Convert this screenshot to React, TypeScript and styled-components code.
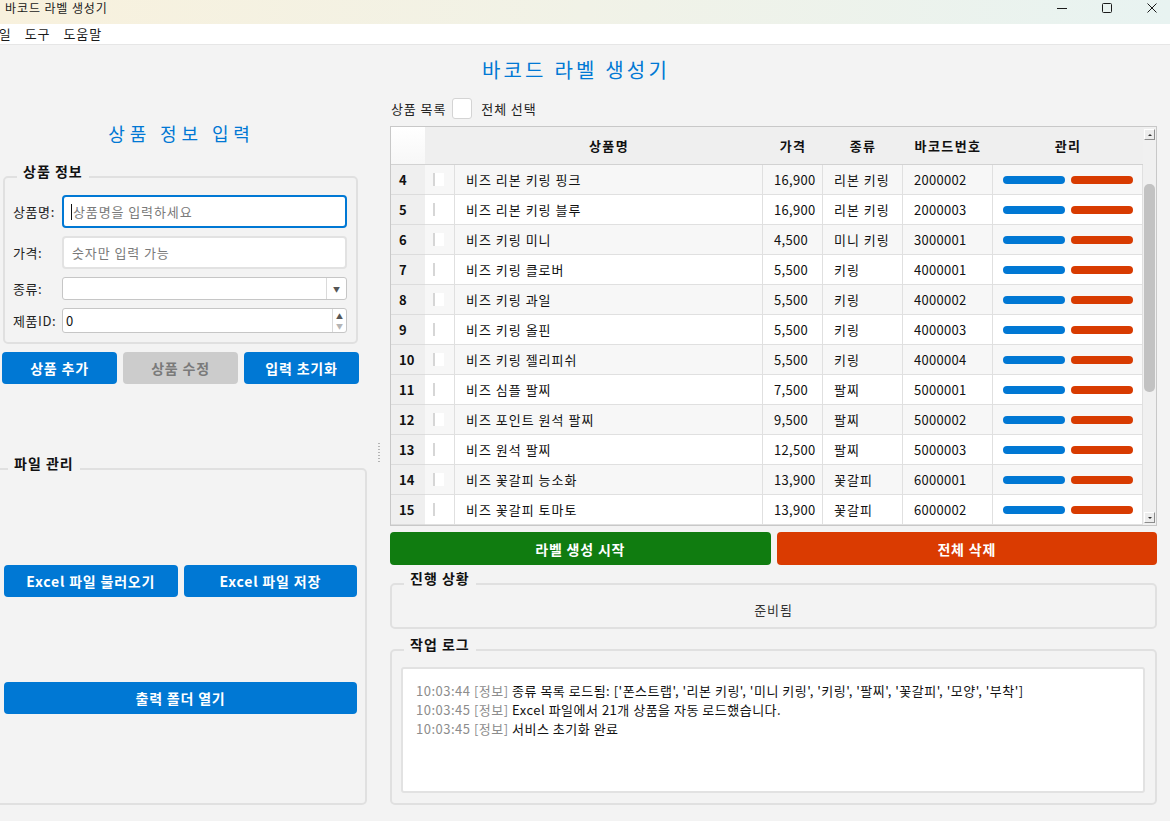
import styled, { createGlobalStyle } from 'styled-components';

const GlobalStyle = createGlobalStyle`
  * {
    box-sizing: border-box;
  }

  html,
  body {
    margin: 0;
    padding: 0;
    background: #f3f3f3;
  }

  body {
    font-family: 'Noto Sans CJK KR', 'Noto Sans', sans-serif;
    font-size: 13px;
    letter-spacing: 0.9px;
    color: #1b1b1b;
    overflow: hidden;
  }
`;

const Window = styled.div`
  width: 1170px;
  height: 821px;
  display: flex;
  flex-direction: column;
  overflow: hidden;
  background: #f3f3f3;
`;

const TitleBar = styled.div`
  height: 24px;
  flex: none;
  display: flex;
  align-items: flex-start;
  background: linear-gradient(90deg, #f8f1dd 0%, #f1f2e7 50%, #e8f3f1 100%);
`;

const TitleText = styled.div`
  flex: 1;
  padding: 0 0 0 5px;
  font-size: 12px;
  line-height: 16px;
  letter-spacing: 0.9px;
  color: #1a1a1a;
`;

const WinControls = styled.div`
  display: flex;
  margin-right: -4px;
`;

const WinButton = styled.div`
  width: 45px;
  height: 16px;
  display: flex;
  align-items: center;
  justify-content: center;
`;

const MenuBar = styled.div`
  height: 21px;
  flex: none;
  background: #fff;
  border-bottom: 1px solid #e6e6e6;
  overflow: hidden;
`;

const MenuList = styled.ul`
  display: flex;
  gap: 13px;
  margin: 0 0 0 -14px;
  padding: 0;
  list-style: none;
  font-size: 13px;
  line-height: 20px;
`;

const AppTitle = styled.h1`
  margin: 0;
  padding: 12px 18px 0 0;
  text-align: center;
  font-size: 20px;
  font-weight: 400;
  line-height: 26px;
  letter-spacing: 3.2px;
  color: #0078d4;
`;

const Split = styled.div`
  flex: 1;
  display: flex;
  margin-top: 9px;
  min-height: 0;
`;

const LeftColumn = styled.div`
  width: 368px;
  flex: none;
  display: flex;
  flex-direction: column;
`;

const SectionTitle = styled.h2`
  margin: 29px 5px 0 0;
  text-align: center;
  font-size: 18px;
  font-weight: 400;
  line-height: 24px;
  letter-spacing: 4.9px;
  color: #0078d4;
`;

const GroupBox = styled.section`
  position: relative;
  border: 2px solid #e0e0e0;
  border-radius: 5px;
`;

const GroupTitle = styled.h3`
  position: absolute;
  top: -15px;
  left: 12px;
  margin: 0;
  padding: 0 6px;
  background: #f3f3f3;
  font-size: 14px;
  font-weight: 700;
  line-height: 16px;
  letter-spacing: 1px;
  color: #111;
`;

const InfoGroup = styled(GroupBox)`
  width: 355px;
  margin: 31px 0 0 3px;
  padding: 17px 9px 9px 8px;
  display: flex;
  flex-direction: column;
  gap: 8px;
`;

const FormRow = styled.div`
  display: flex;
  align-items: center;
`;

const FieldLabel = styled.label`
  width: 49px;
  flex: none;
  font-size: 13px;
  line-height: 16px;
  letter-spacing: 0.6px;
  color: #222;
`;

const TextField = styled.div<{ $focused?: boolean }>`
  flex: 1;
  height: 33px;
  display: flex;
  align-items: center;
  padding-left: ${({ $focused }) => ($focused ? '7px' : '8px')};
  background: #fff;
  border: 2px solid ${({ $focused }) => ($focused ? '#0078d4' : '#e2e2e2')};
  border-radius: 4px;
`;

const Caret = styled.span`
  width: 1px;
  height: 16px;
  margin-right: 1px;
  background: #111;
`;

const Placeholder = styled.span`
  font-size: 13px;
  line-height: 16px;
  color: #7a7a7a;
`;

const ComboBox = styled.div`
  flex: 1;
  height: 23px;
  display: flex;
  background: #fff;
  border: 1px solid #c6c6c6;
  border-radius: 3px;
`;

const ComboValue = styled.div`
  flex: 1;
`;

const ComboArrow = styled.div`
  width: 20px;
  border-left: 1px solid #dadada;
  display: flex;
  align-items: center;
  justify-content: center;
  font-size: 7px;
  letter-spacing: 0;
  color: #555;
`;

const SpinBox = styled.div`
  flex: 1;
  height: 25px;
  display: flex;
  background: #fff;
  border: 1px solid #c6c6c6;
  border-radius: 3px;
`;

const SpinValue = styled.div`
  flex: 1;
  padding-left: 3px;
  font-size: 13px;
  line-height: 23px;
  color: #111;
`;

const SpinArrows = styled.div`
  width: 14px;
  border-left: 1px solid #dadada;
  display: flex;
  flex-direction: column;
  align-items: center;
  justify-content: center;
  font-size: 7px;
  line-height: 10px;
  letter-spacing: 0;
`;

const SpinArrow = styled.span<{ $dim?: boolean }>`
  color: ${({ $dim }) => ($dim ? '#b5b5b5' : '#555')};
`;

const ButtonRow = styled.div`
  display: flex;
  gap: 6px;
`;

const InfoButtons = styled(ButtonRow)`
  width: 357px;
  margin: 8px 0 0 2px;
`;

const Button = styled.button<{ $tone?: 'blue' | 'gray' | 'green' | 'red' }>`
  flex: 1;
  height: ${({ $tone }) => ($tone === 'green' || $tone === 'red' ? '33px' : '32px')};
  border: none;
  border-radius: 4px;
  font-family: inherit;
  font-size: 14px;
  font-weight: 700;
  letter-spacing: 0.8px;
  color: ${({ $tone }) => ($tone === 'gray' ? '#7a7a7a' : '#fff')};
  background: ${({ $tone }) =>
    $tone === 'gray' ? '#cccccc' : $tone === 'green' ? '#107c10' : $tone === 'red' ? '#da3b01' : '#0078d4'};
`;

const FileGroup = styled(GroupBox)`
  width: 373px;
  height: 337px;
  margin: 84px 0 0 -6px;
  padding: 95px 8px 0 8px;
`;

const FileButtons = styled(ButtonRow)`
  margin-bottom: 85px;
`;

const Splitter = styled.div`
  width: 22px;
  flex: none;
  display: flex;
  align-items: center;
  justify-content: center;
`;

const SplitHandle = styled.div`
  width: 2px;
  height: 20px;
  margin-top: -8px;
  background: repeating-linear-gradient(180deg, #b4b4b4 0 1px, transparent 1px 3px);
`;

const RightColumn = styled.div`
  width: 767px;
  flex: none;
  display: flex;
  flex-direction: column;
  padding-top: 6px;
`;

const ListHeader = styled.div`
  height: 21px;
  display: flex;
  align-items: center;
  padding-left: 1px;
  font-size: 13px;
  color: #222;
`;

const SelectAllBox = styled.span`
  width: 20px;
  height: 21px;
  margin: 0 9px 0 6px;
  background: #fff;
  border: 1px solid #d4d4d4;
  border-radius: 3px;
`;

const Table = styled.div`
  height: 400px;
  margin-top: 7px;
  display: flex;
  background: #fff;
  border: 1px solid #c8c8c8;
  overflow: hidden;
`;

const Grid = styled.div`
  width: 752px;
  flex: none;
`;

const columns = '34px 30px 308px 60px 80px 90px 150px';

const HeaderRow = styled.div`
  height: 38px;
  display: grid;
  grid-template-columns: ${columns};
  background: #efefef;
  border-bottom: 1px solid #d2d2d2;
`;

const CornerCell = styled.div`
  background: linear-gradient(180deg, #ffffff 0%, #f7f7f7 100%);
`;

const HeaderCell = styled.div`
  display: flex;
  align-items: center;
  justify-content: center;
  font-size: 13px;
  font-weight: 700;
  letter-spacing: 1.4px;
  color: #111;
`;

const Row = styled.div<{ $alt: boolean }>`
  height: 30px;
  display: grid;
  grid-template-columns: ${columns};
  background: ${({ $alt }) => ($alt ? '#f7f7f7' : '#fff')};
`;

const RowNum = styled.div`
  display: flex;
  align-items: center;
  padding-left: 8px;
  background: #efefef;
  border-bottom: 1px solid #dcdcdc;
  font-size: 13px;
  font-weight: 700;
  letter-spacing: 0;
  color: #111;
`;

const Cell = styled.div<{ $small?: boolean }>`
  display: flex;
  align-items: center;
  padding-left: 11px;
  border-right: 1px solid #e0e0e0;
  border-bottom: 1px solid #e0e0e0;
  font-size: 13px;
  letter-spacing: ${({ $small }) => ($small ? '0.3px' : '1px')};
  color: #111;
  white-space: nowrap;
`;

const CheckCell = styled(Cell)`
  padding-left: 8px;
`;

const CheckStub = styled.span`
  width: 11px;
  height: 13px;
  background: #fff;
  border-left: 2px solid #d6d6d6;
`;

const ManageCell = styled(Cell)`
  gap: 6px;
  padding-left: 10px;
`;

const Pill = styled.span<{ $danger?: boolean }>`
  width: 62px;
  height: 8px;
  border-radius: 4px;
  background: ${({ $danger }) => ($danger ? '#d83b01' : '#0078d4')};
`;

const ScrollBar = styled.div`
  flex: 1;
  display: flex;
  flex-direction: column;
  align-items: center;
  background: #f0f0f0;
`;

const ScrollArrow = styled.span<{ $down?: boolean }>`
  width: 11px;
  height: 11px;
  margin: ${({ $down }) => ($down ? '0 0 2px' : '2px 0 0')};
  display: flex;
  align-items: center;
  justify-content: center;
  background: #ececec;
  border: 1px solid;
  border-color: #ffffff #8c8c8c #8c8c8c #ffffff;

  &::after {
    content: '';
    border-left: 2px solid transparent;
    border-right: 2px solid transparent;
    ${({ $down }) => ($down ? 'border-top: 2px solid #333;' : 'border-bottom: 2px solid #333;')}
  }
`;

const ScrollTrack = styled.div`
  flex: 1;
  width: 100%;
  display: flex;
  justify-content: center;
`;

const ScrollThumb = styled.span`
  width: 11px;
  height: 208px;
  margin-top: 44px;
  border-radius: 5px;
  background: #c2c2c2;
`;

const ActionButtons = styled(ButtonRow)`
  margin-top: 6px;
`;

const StatusGroup = styled(GroupBox)`
  height: 46px;
  margin-top: 18px;
  padding-top: 17px;
  text-align: center;
  font-size: 13px;
  line-height: 16px;
  color: #333;
`;

const LogGroup = styled(GroupBox)`
  height: 156px;
  margin-top: 20px;
  padding: 16px 10px 10px 9px;
`;

const LogArea = styled.div`
  height: 126px;
  padding: 12px 13px;
  background: #fff;
  border: 2px solid #e2e2e2;
  border-radius: 3px;
`;

const LogLine = styled.div`
  font-size: 13px;
  line-height: 19px;
  letter-spacing: 0.5px;
  color: #111;
  white-space: nowrap;
`;

const LogMeta = styled.span`
  color: #8c8c8c;
`;

const products = [
  { no: 4, name: '비즈 리본 키링 핑크', price: '16,900', kind: '리본 키링', code: '2000002' },
  { no: 5, name: '비즈 리본 키링 블루', price: '16,900', kind: '리본 키링', code: '2000003' },
  { no: 6, name: '비즈 키링 미니', price: '4,500', kind: '미니 키링', code: '3000001' },
  { no: 7, name: '비즈 키링 클로버', price: '5,500', kind: '키링', code: '4000001' },
  { no: 8, name: '비즈 키링 과일', price: '5,500', kind: '키링', code: '4000002' },
  { no: 9, name: '비즈 키링 올핀', price: '5,500', kind: '키링', code: '4000003' },
  { no: 10, name: '비즈 키링 젤리피쉬', price: '5,500', kind: '키링', code: '4000004' },
  { no: 11, name: '비즈 심플 팔찌', price: '7,500', kind: '팔찌', code: '5000001' },
  { no: 12, name: '비즈 포인트 원석 팔찌', price: '9,500', kind: '팔찌', code: '5000002' },
  { no: 13, name: '비즈 원석 팔찌', price: '12,500', kind: '팔찌', code: '5000003' },
  { no: 14, name: '비즈 꽃갈피 능소화', price: '13,900', kind: '꽃갈피', code: '6000001' },
  { no: 15, name: '비즈 꽃갈피 토마토', price: '13,900', kind: '꽃갈피', code: '6000002' },
];

const logs = [
  { time: '10:03:44', text: "종류 목록 로드됨: ['폰스트랩', '리본 키링', '미니 키링', '키링', '팔찌', '꽃갈피', '모양', '부착']" },
  { time: '10:03:45', text: 'Excel 파일에서 21개 상품을 자동 로드했습니다.' },
  { time: '10:03:45', text: '서비스 초기화 완료' },
];

const App = () => {
  return (
    <Window>
      <GlobalStyle />
      <TitleBar>
        <TitleText>바코드 라벨 생성기</TitleText>
        <WinControls>
          <WinButton>
            <svg width='10' height='10' viewBox='0 0 10 10'>
              <line x1='0' y1='5.5' x2='10' y2='5.5' stroke='#1a1a1a' strokeWidth='1' />
            </svg>
          </WinButton>
          <WinButton>
            <svg width='10' height='10' viewBox='0 0 10 10'>
              <rect x='0.5' y='0.5' width='9' height='9' rx='1' fill='none' stroke='#1a1a1a' strokeWidth='1' />
            </svg>
          </WinButton>
          <WinButton>
            <svg width='10' height='10' viewBox='0 0 10 10'>
              <path d='M0.5 0.5 L9.5 9.5 M9.5 0.5 L0.5 9.5' stroke='#1a1a1a' strokeWidth='1' />
            </svg>
          </WinButton>
        </WinControls>
      </TitleBar>
      <MenuBar>
        <MenuList>
          <li>파일</li>
          <li>도구</li>
          <li>도움말</li>
        </MenuList>
      </MenuBar>

      <AppTitle>바코드 라벨 생성기</AppTitle>

      <Split>
        <LeftColumn>
          <SectionTitle>상품 정보 입력</SectionTitle>
          <InfoGroup>
            <GroupTitle>상품 정보</GroupTitle>
            <FormRow>
              <FieldLabel>상품명:</FieldLabel>
              <TextField $focused>
                <Caret />
                <Placeholder>상품명을 입력하세요</Placeholder>
              </TextField>
            </FormRow>
            <FormRow>
              <FieldLabel>가격:</FieldLabel>
              <TextField>
                <Placeholder>숫자만 입력 가능</Placeholder>
              </TextField>
            </FormRow>
            <FormRow>
              <FieldLabel>종류:</FieldLabel>
              <ComboBox>
                <ComboValue />
                <ComboArrow>▼</ComboArrow>
              </ComboBox>
            </FormRow>
            <FormRow>
              <FieldLabel>제품ID:</FieldLabel>
              <SpinBox>
                <SpinValue>0</SpinValue>
                <SpinArrows>
                  <SpinArrow>▲</SpinArrow>
                  <SpinArrow $dim>▼</SpinArrow>
                </SpinArrows>
              </SpinBox>
            </FormRow>
          </InfoGroup>
          <InfoButtons>
            <Button $tone='blue'>상품 추가</Button>
            <Button $tone='gray'>상품 수정</Button>
            <Button $tone='blue'>입력 초기화</Button>
          </InfoButtons>

          <FileGroup>
            <GroupTitle>파일 관리</GroupTitle>
            <FileButtons>
              <Button $tone='blue'>Excel 파일 불러오기</Button>
              <Button $tone='blue'>Excel 파일 저장</Button>
            </FileButtons>
            <ButtonRow>
              <Button $tone='blue'>출력 폴더 열기</Button>
            </ButtonRow>
          </FileGroup>
        </LeftColumn>

        <Splitter>
          <SplitHandle />
        </Splitter>

        <RightColumn>
          <ListHeader>
            <span>상품 목록</span>
            <SelectAllBox />
            <span>전체 선택</span>
          </ListHeader>

          <Table>
            <Grid>
              <HeaderRow>
                <CornerCell />
                <HeaderCell />
                <HeaderCell>상품명</HeaderCell>
                <HeaderCell>가격</HeaderCell>
                <HeaderCell>종류</HeaderCell>
                <HeaderCell>바코드번호</HeaderCell>
                <HeaderCell>관리</HeaderCell>
              </HeaderRow>
              {products.map((p) => (
                <Row key={p.no} $alt={p.no % 2 === 0}>
                  <RowNum>{p.no}</RowNum>
                  <CheckCell>
                    <CheckStub />
                  </CheckCell>
                  <Cell>{p.name}</Cell>
                  <Cell $small>{p.price}</Cell>
                  <Cell>{p.kind}</Cell>
                  <Cell $small>{p.code}</Cell>
                  <ManageCell>
                    <Pill />
                    <Pill $danger />
                  </ManageCell>
                </Row>
              ))}
            </Grid>
            <ScrollBar>
              <ScrollArrow />
              <ScrollTrack>
                <ScrollThumb />
              </ScrollTrack>
              <ScrollArrow $down />
            </ScrollBar>
          </Table>

          <ActionButtons>
            <Button $tone='green'>라벨 생성 시작</Button>
            <Button $tone='red'>전체 삭제</Button>
          </ActionButtons>

          <StatusGroup>
            <GroupTitle>진행 상황</GroupTitle>
            준비됨
          </StatusGroup>

          <LogGroup>
            <GroupTitle>작업 로그</GroupTitle>
            <LogArea>
              {logs.map((l, i) => (
                <LogLine key={i}>
                  <LogMeta>{l.time} [정보]</LogMeta> {l.text}
                </LogLine>
              ))}
            </LogArea>
          </LogGroup>
        </RightColumn>
      </Split>
    </Window>
  );
};

export default App;
